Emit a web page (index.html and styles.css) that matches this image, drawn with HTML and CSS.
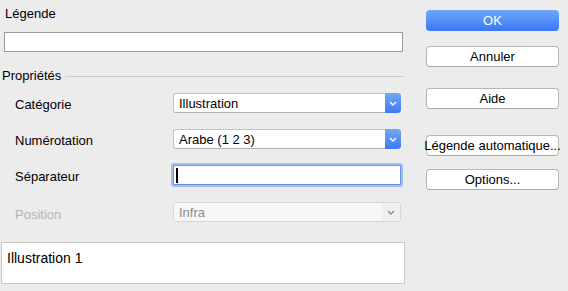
FILE: index.html
```html
<!DOCTYPE html>
<html lang="fr">
<head>
    <meta charset="UTF-8">
    <title>Légende</title>
    <link rel="stylesheet" href="styles.css">
</head>
<body>
    <div class="dialog">
        <div class="main">
            <div class="caption-label">Légende</div>
            <div class="text-field"></div>

            <div class="group-title">
                <span>Propriétés</span>
                <span class="rule"></span>
            </div>

            <div class="props">
                <div class="row">
                    <span class="row-label">Catégorie</span>
                    <div class="popup">
                        <span class="popup-text">Illustration</span>
                        <span class="popup-arrow">
                            <svg width="8" height="5" viewBox="0 0 8 5"><path d="M1 1 L4 4 L7 1" fill="none" stroke="#fff" stroke-width="1.4"/></svg>
                        </span>
                    </div>
                </div>
                <div class="row">
                    <span class="row-label">Numérotation</span>
                    <div class="popup">
                        <span class="popup-text">Arabe (1 2 3)</span>
                        <span class="popup-arrow">
                            <svg width="8" height="5" viewBox="0 0 8 5"><path d="M1 1 L4 4 L7 1" fill="none" stroke="#fff" stroke-width="1.4"/></svg>
                        </span>
                    </div>
                </div>
                <div class="row row-sep">
                    <span class="row-label">Séparateur</span>
                    <div class="focus-field"><span class="caret"></span></div>
                </div>
                <div class="row disabled">
                    <span class="row-label">Position</span>
                    <div class="popup">
                        <span class="popup-text">Infra</span>
                        <span class="popup-arrow">
                            <svg width="8" height="5" viewBox="0 0 8 5"><path d="M1 1 L4 4 L7 1" fill="none" stroke="#8a8a8a" stroke-width="1.3"/></svg>
                        </span>
                    </div>
                </div>
            </div>

            <div class="preview">Illustration 1</div>
        </div>

        <div class="buttons">
            <div class="btn btn-ok">OK</div>
            <div class="btn btn-cancel">Annuler</div>
            <div class="btn btn-help">Aide</div>
            <div class="btn btn-auto">Légende automatique...</div>
            <div class="btn btn-options">Options...</div>
        </div>
    </div>
</body>
</html>
```

FILE: styles.css
```css
body {
    margin: 0;
    background: #ececec;
    font-family: "Liberation Sans", Arial, sans-serif;
    font-size: 13px;
    line-height: 16px;
    color: #000;
}
.dialog {
    display: flex;
    height: 291px;
}
.main {
    width: 406px;
    padding-top: 6px;
}
.caption-label {
    margin-left: 5px;
}
.text-field {
    margin: 10px 0 0 4px;
    width: 397px;
    height: 18px;
    background: #fff;
    border: 1px solid #9a9a9a;
}
.group-title {
    display: flex;
    align-items: center;
    margin: 16px 0 0 2px;
}
.rule {
    flex: 1;
    height: 1px;
    margin: 0 2px 0 4px;
    background: #cbcbcb;
}
.props {
    display: flex;
    flex-direction: column;
    gap: 16px;
    margin-top: 9px;
}
.row {
    display: flex;
    height: 20px;
}
.row-sep {
    margin-top: 0;
}
.disabled {
    margin-top: 1px;
}
.row-label {
    width: 158px;
    padding: 4px 0 0 15px;
}
.disabled .row-label {
    color: #b4b4b4;
    padding-top: 5px;
}
.popup {
    display: flex;
    width: 228px;
    height: 20px;
    box-sizing: border-box;
    background: #fff;
    border: 1px solid #c3c3c3;
    border-bottom-color: #b0b0b0;
    border-radius: 3px;
}
.popup-text {
    flex: 1;
    padding: 2px 0 0 5px;
}
.popup-arrow {
    width: 16px;
    margin: -1px -1px -1px 0;
    display: flex;
    align-items: center;
    justify-content: center;
    border-radius: 0 4px 4px 0;
    background: linear-gradient(#72a8f9, #3e79f5);
}
.disabled .popup {
    background: #f6f6f6;
    border-color: #d6d6d6;
    color: #8c8c8c;
}
.disabled .popup-arrow {
    background: #f0f0f0;
    margin: 0;
    width: 18px;
}
.focus-field {
    width: 226px;
    height: 18px;
    background: #fff;
    border: 1px solid #6f94d6;
    box-shadow: 0 0 0 2px #9dbdf3;
    border-radius: 1px;
    display: flex;
    align-items: center;
}
.caret {
    width: 2px;
    height: 15px;
    margin-left: 2px;
    background: #000;
}
.preview {
    margin: 20px 0 0 1px;
    width: 397px;
    height: 33px;
    padding: 7px 0 0 5px;
    background: #fff;
    border: 1px solid #c8c8c8;
    font-size: 14px;
}
.buttons {
    display: flex;
    flex-direction: column;
    margin-left: 20px;
    padding-top: 10px;
}
.btn {
    width: 131px;
    height: 19px;
    display: flex;
    align-items: center;
    justify-content: center;
    white-space: nowrap;
    background: #fff;
    border: 1px solid #b8b8b8;
    border-bottom-color: #a8a8a8;
    border-radius: 4px;
}
.btn-ok {
    height: 21px;
    color: #fff;
    border: none;
    width: 133px;
    background: linear-gradient(#6ea7fa, #3b77f5);
}
.btn-cancel {
    margin-top: 15px;
}
.btn-help {
    margin-top: 21px;
}
.btn-auto {
    margin-top: 26px;
}
.btn-options {
    margin-top: 13px;
}
```
